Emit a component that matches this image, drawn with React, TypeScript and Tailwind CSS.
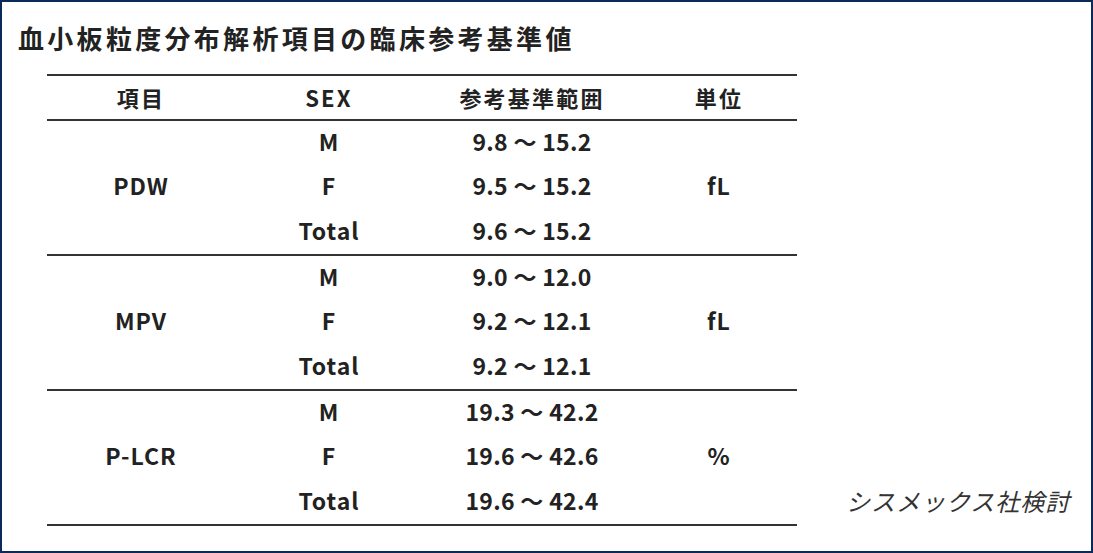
import React from 'react';

const font = { fontFamily: '"Noto Sans CJK JP", "Noto Sans", sans-serif' };

const groups = [
  {
    name: 'PDW',
    unit: 'fL',
    rows: [
      ['M', '9.8 ～ 15.2'],
      ['F', '9.5 ～ 15.2'],
      ['Total', '9.6 ～ 15.2'],
    ],
  },
  {
    name: 'MPV',
    unit: 'fL',
    rows: [
      ['M', '9.0 ～ 12.0'],
      ['F', '9.2 ～ 12.1'],
      ['Total', '9.2 ～ 12.1'],
    ],
  },
  {
    name: 'P-LCR',
    unit: '%',
    rows: [
      ['M', '19.3 ～ 42.2'],
      ['F', '19.6 ～ 42.6'],
      ['Total', '19.6 ～ 42.4'],
    ],
  },
];

const cols = 'grid grid-cols-[188px_188px_218px_156px]';

export default function App() {
  return (
    <div
      style={font}
      className="w-[1093px] h-[553px] border-2 border-[#0b2a5c] bg-white text-[#222]"
    >
      <h1 className="ml-[16px] mt-[17px] text-[26px] leading-[38px] font-bold tracking-[3.3px]">
        血小板粒度分布解析項目の臨床参考基準値
      </h1>

      <div className="flex items-end mt-[17px]">
        <div className="ml-[45px] w-[750px] border-t-2 border-[#333]">
          {/* header */}
          <div className={`${cols} h-[45px] items-center text-center text-[22px] font-bold tracking-[2.2px] border-b-2 border-[#333]`}>
            <div>項目</div>
            <div>SEX</div>
            <div>参考基準範囲</div>
            <div>単位</div>
          </div>

          {groups.map((g) => (
            <div
              key={g.name}
              className={`${cols} grid-rows-3 h-[135px] text-center text-[23px] font-bold tracking-[1px] border-b-2 border-[#333]`}
            >
              <div className="row-span-3 flex items-center justify-center pb-[4px]">{g.name}</div>
              {g.rows.map(([sex, range], i) => (
                <React.Fragment key={sex}>
                  <div className="col-start-2 flex items-center justify-center pb-[4px]" style={{ gridRowStart: i + 1 }}>
                    {sex}
                  </div>
                  <div className="col-start-3 flex items-center justify-center pb-[4px] tracking-[0.3px]" style={{ gridRowStart: i + 1 }}>
                    {range}
                  </div>
                </React.Fragment>
              ))}
              <div className="col-start-4 row-start-1 row-span-3 flex items-center justify-center pb-[4px]">{g.unit}</div>
            </div>
          ))}
        </div>

        <div className="ml-[49px] mb-[2px] h-[45px] pb-[2px] flex items-center text-[24px] italic text-[#333] tracking-[1px]">
          シスメックス社検討
        </div>
      </div>
    </div>
  );
}
